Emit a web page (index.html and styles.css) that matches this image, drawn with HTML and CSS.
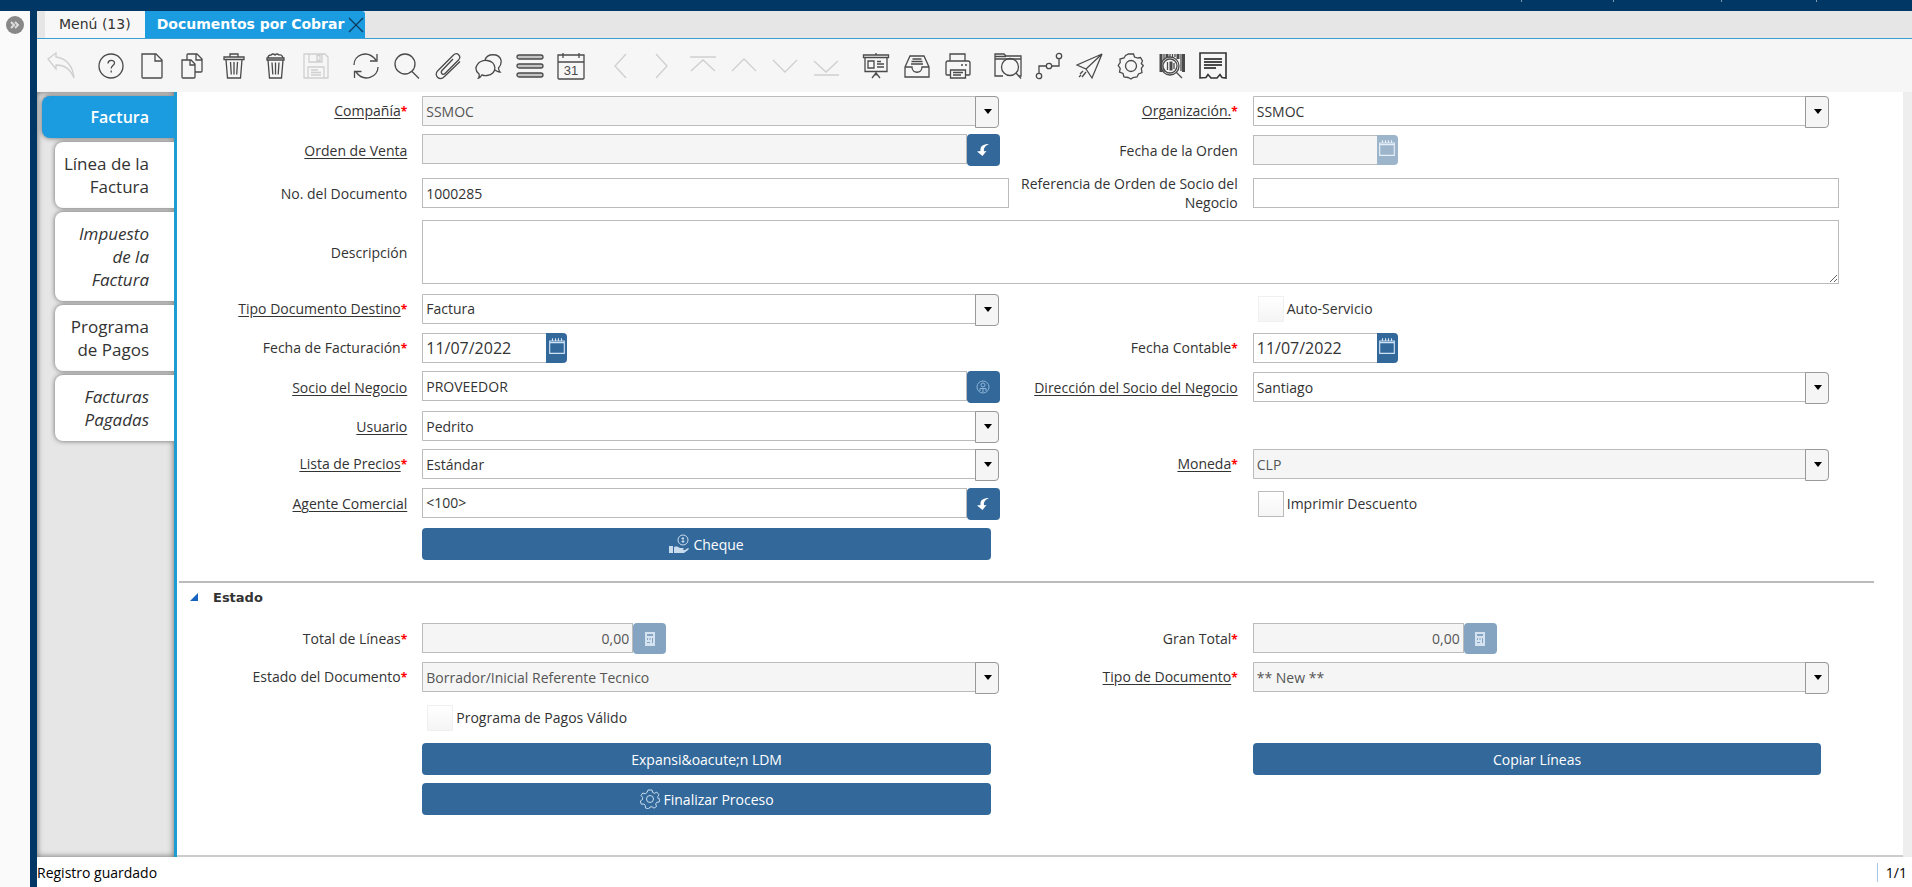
FILE: index.html
```html
<!DOCTYPE html>
<html lang="es">
<head>
    <meta charset="UTF-8">
    <meta name="viewport" content="width=device-width, initial-scale=1.0">
    <title>Documentos por Cobrar</title>
    <link rel="stylesheet" href="styles.css">
</head>
<body>
    <header class="top-bar">
        <span class="top-item item-user"></span>
        <span class="top-item item-prefs"></span>
        <span class="top-item item-role"></span>
        <span class="top-item item-exit"></span>
    </header>
    <div class="desktop">
        <div class="rail">
            <button class="expand-btn" type="button" aria-label="Expandir">
                <svg viewBox="0 0 18 18"><path d="M5 6l3 3-3 3M9 6l3 3-3 3"/></svg>
            </button>
        </div>
        <div class="window">
            <nav class="tabs">
                <button class="tab" type="button">Menú (13)</button>
                <button class="tab active" type="button">Documentos por Cobrar
                    <svg viewBox="0 0 16 16"><path d="M1 1l14 14M15 1L1 15"/></svg>
                </button>
            </nav>

            <div class="toolbar">
                <div class="group">
                    <button type="button" aria-label="Deshacer" disabled><svg viewBox="0 0 28 28"><path d="M1 7l8-6v4c9 1 17 8 18 21-4-9-9-13-18-13v4L1 7z"/></svg></button>
                </div>
                <div class="group">
                    <button type="button" aria-label="Ayuda"><svg viewBox="0 0 28 28"><circle cx="14" cy="14" r="12"/><path d="M11 11.500c0-4 6.500-4 6.500-.5 0 2.500-3.300 2.700-3.300 5.500M14.200 18.500v2"/></svg></button>
                    <button type="button" aria-label="Nuevo"><svg viewBox="0 0 28 28"><path d="M4 2h14l6 6v17q0 1-1 1H5q-1 0-1-1zM17 2v7h7"/></svg></button>
                    <button type="button" aria-label="Copiar"><svg viewBox="0 0 28 28"><path d="M3 8h9l4 4v13q0 1-1 1H4q-1 0-1-1zM11 8v5h5M8 8V3q0-1 1-1h9l5 5v12q0 1-1 1h-6M17 2v6h6"/></svg></button>
                    <button type="button" aria-label="Borrar"><svg viewBox="0 0 28 28"><path d="M4 5h20v2.500H4zM10 5V2h8v3M6 7.500L7.500 26h13L22 7.500M10.500 10l.8 12.500M14 10v12.500M17.500 10l-.8 12.500"/></svg></button>
                    <button type="button" aria-label="Borrar varios"><svg viewBox="0 0 28 28"><path d="M6 6h17v2H6zM7 6q0-3 3-3 2-2 4 0 2-2 4 0 3-1 4 3M7 8l1.500 18h12L22 8M11 10.500l.8 12M14.500 10.500v12M18 10.500l-.8 12"/></svg></button>
                    <button type="button" aria-label="Guardar" disabled><svg viewBox="0 0 28 28"><path d="M2 2h21l3 3v21H2zM7 2v8h13V2M15 3.500h3v5h-3zM6 26V15h16v11M9 18h7M9 20.500h10M9 23h10"/></svg></button>
                </div>
                <div class="group">
                    <button type="button" aria-label="Refrescar"><svg viewBox="0 0 28 28"><path d="M2 13C2 3 15-3 24 8M25 2v7h-7M26 15c0 10-14 16-22 5M2.500 26v-6.500h7"/></svg></button>
                    <button type="button" aria-label="Buscar"><svg viewBox="0 0 28 28"><circle cx="12" cy="12" r="10"/><path d="M19 19.500l7 7"/></svg></button>
                    <button type="button" aria-label="Adjuntos"><svg viewBox="0 0 28 28"><path d="M19 7L8 18.500c-2 2.500 1 5 3 3L24.500 8C28 4 23-.5 19.500 3L4 18.500c-5 5 1.500 11 6.500 6L26 9.500"/></svg></button>
                    <button type="button" aria-label="Chat"><svg viewBox="0 0 28 28"><path d="M3.500 26c1-1.500 1-2.500.5-4-7-6-.5-14 8-13.500 10 .5 11 14 0 15-2 .2-4-.2-5-.7-1 1.500-2 2.800-3.500 3.200zM10 8C12 1 24 1 26 8c.7 4-.5 6-2.500 8 0 2 .5 3 1.500 4-2.500 0-3.500-1-5-2"/></svg></button>
                    <button type="button" aria-label="Cuadrícula"><svg viewBox="0 0 28 28"><rect class="bar" x="1" y="3" width="26" height="4" rx="2"/><rect class="bar" x="1" y="12" width="26" height="4" rx="2"/><rect class="bar" x="1" y="21" width="26" height="4" rx="2"/></svg></button>
                    <button type="button" aria-label="Calendario"><svg viewBox="0 0 28 28"><path d="M1 3h26v23q0 1-1 1H2q-1 0-1-1zM1 10h26M6 1v5M22 1v5"/><text x="14" y="23">31</text></svg></button>
                </div>
                <div class="group">
                    <button type="button" aria-label="Anterior" disabled><svg viewBox="0 0 28 28"><path d="M19 2L8 14l11 12"/></svg></button>
                    <button type="button" aria-label="Siguiente" disabled><svg viewBox="0 0 28 28"><path d="M8 2l11 12L8 26"/></svg></button>
                    <button type="button" aria-label="Primero" disabled><svg viewBox="0 0 28 28"><path d="M1 5h26M2 19L14 8l12 11"/></svg></button>
                    <button type="button" aria-label="Subir" disabled><svg viewBox="0 0 28 28"><path d="M2 19L14 7l12 12"/></svg></button>
                    <button type="button" aria-label="Bajar" disabled><svg viewBox="0 0 28 28"><path d="M2 8l12 12L26 8"/></svg></button>
                    <button type="button" aria-label="Último" disabled><svg viewBox="0 0 28 28"><path d="M2 9l12 11L26 9M2 23h25"/></svg></button>
                </div>
                <div class="group">
                    <button type="button" aria-label="Informe"><svg viewBox="0 0 28 28"><path d="M1.500 3h25v2.500h-25zM3 5.500v14h22v-14M14 1v2M14 19.500v4M14 21l-4 5M14 21l4 5M6 9h6v7H6zM15 9.500h4M15 12h7M15 15h7"/></svg></button>
                    <button type="button" aria-label="Archivo"><svg viewBox="0 0 28 28"><path d="M2 15L7 4h14l5 11v10H2zM2 15h7c0 7 10 7 10 0h7M9.500 7h9M8.500 9.500h11M8 12h12"/></svg></button>
                    <button type="button" aria-label="Imprimir"><svg viewBox="0 0 28 28"><path d="M6 9V2h15v7M6 23H3q-1 0-1-1V11q0-2 2-2h20q2 0 2 2v11q0 1-1 1h-3M6.500 18h15v8h-15zM9 20.500h10M9 23h8M17 13h2M21 13h2"/></svg></button>
                </div>
                <div class="group">
                    <button type="button" aria-label="Zoom"><svg viewBox="0 0 28 28"><path d="M9 24H1V2h9l2 2h15v20h-2M1 7h26M1 4.500h11"/><circle cx="16" cy="15" r="8.500"/><path d="M22 21l5 5.500"/></svg></button>
                    <button type="button" aria-label="Flujo"><svg viewBox="0 0 28 28"><circle cx="4" cy="24" r="2.700"/><circle cx="14" cy="14" r="2.700"/><circle cx="24" cy="4" r="2.700"/><path d="M4 21v-7h7M17 14h7V7"/></svg></button>
                    <button type="button" aria-label="Enviar"><svg viewBox="0 0 28 28"><path d="M26 2L1 13l9 4L26 2l-10 24-6-9M4 22l3-3M6 25l4-5M3 25l2-2"/></svg></button>
                    <button type="button" aria-label="Proceso"><svg viewBox="0 0 28 28"><circle cx="14" cy="14" r="5.500"/><path d="M11.500 2h5l1 3 3.500 1 2.500-.5 2 3.500-1.200 2.500 2 2-2 3 .7 4-3.500 1.500-1.500 3-4 .5-2 1.500-3-1.500-4-.5-1-3.500L2.500 20l.7-3.500-2-3 2-3L3 7l4-1 1.500-2.500z"/></svg></button>
                    <button type="button" aria-label="Código de barras"><svg viewBox="0 0 28 28"><path class="thick" d="M3 2v18M9 2v4M20 2v5M25.500 2v18"/><path d="M6 2v6M12 2v3M14.500 2v3M17 2v3M23 2v17M6 17v3"/><circle cx="12" cy="14" r="7"/><circle cx="12" cy="14" r="9"/><path class="thick" d="M13 9.500v9"/><path d="M9.500 10v8M16 11v6M18 20l6 6"/></svg></button>
                    <button type="button" aria-label="Recibo"><svg viewBox="0 0 28 28"><path class="dark" d="M1 1h26v25l-4-.5-2-3-3 3.500h-6l-3-3.500-2 3-6 .5z"/><path class="lines" d="M5 7h18M5 10h18M5 13h18M5 16h12"/></svg></button>
                </div>
            </div>

            <div class="content">
                <nav class="side-tabs">
                    <button class="side-tab selected" type="button">Factura</button>
                    <button class="side-tab" type="button">Línea de la Factura</button>
                    <button class="side-tab readonly" type="button">Impuesto de la Factura</button>
                    <button class="side-tab" type="button">Programa de Pagos</button>
                    <button class="side-tab readonly" type="button">Facturas Pagadas</button>
                </nav>

                <form class="form">
                    <div class="fields">
                        <label class="label" for="compania"><u>Compañía</u><b>*</b></label>
                        <div class="cell"><span class="combo"><select id="compania" disabled><option>SSMOC</option></select></span></div>
                        <label class="label" for="organizacion"><u>Organización.</u><b>*</b></label>
                        <div class="cell"><span class="combo"><select id="organizacion"><option>SSMOC</option></select></span></div>

                        <label class="label" for="orden"><u>Orden de Venta</u></label>
                        <div class="cell">
                            <span class="lookup">
                                <input id="orden" type="text" disabled>
                                <button class="icon-btn" type="button" aria-label="Buscar orden"><svg viewBox="0 0 14 14"><path class="fill" d="M13 1C7 1 4 3 4.500 8L1 8.500 6.500 13l4-5-2.500.3C7.500 5 9 3 13 1z"/></svg></button>
                            </span>
                        </div>
                        <label class="label" for="fecha-orden">Fecha de la Orden</label>
                        <div class="cell">
                            <span class="date">
                                <input id="fecha-orden" type="text" disabled>
                                <button class="date-btn" type="button" aria-label="Calendario" disabled><svg viewBox="0 0 16 16"><path d="M1.500 3.500h13v11h-13zM1.500 5h13M4 1v3M6.700 1v3M9.300 1v3M12 1v3"/></svg></button>
                            </span>
                        </div>

                        <label class="label" for="documento">No. del Documento</label>
                        <div class="cell"><input id="documento" type="text" value="1000285"></div>
                        <label class="label" for="referencia">Referencia de Orden de Socio del Negocio</label>
                        <div class="cell"><input id="referencia" type="text"></div>

                        <label class="label" for="descripcion">Descripción</label>
                        <div class="cell wide"><textarea id="descripcion"></textarea></div>

                        <label class="label" for="tipo-destino"><u>Tipo Documento Destino</u><b>*</b></label>
                        <div class="cell"><span class="combo"><select id="tipo-destino"><option>Factura</option></select></span></div>
                        <div class="cell check right"><input id="auto-servicio" type="checkbox" disabled><label for="auto-servicio">Auto-Servicio</label></div>

                        <label class="label" for="fecha-factura">Fecha de Facturación<b>*</b></label>
                        <div class="cell">
                            <span class="date">
                                <input id="fecha-factura" type="text" value="11/07/2022">
                                <button class="date-btn" type="button" aria-label="Calendario"><svg viewBox="0 0 16 16"><path d="M1.500 3.500h13v11h-13zM1.500 5h13M4 1v3M6.700 1v3M9.300 1v3M12 1v3"/></svg></button>
                            </span>
                        </div>
                        <label class="label" for="fecha-contable">Fecha Contable<b>*</b></label>
                        <div class="cell">
                            <span class="date">
                                <input id="fecha-contable" type="text" value="11/07/2022">
                                <button class="date-btn" type="button" aria-label="Calendario"><svg viewBox="0 0 16 16"><path d="M1.500 3.500h13v11h-13zM1.500 5h13M4 1v3M6.700 1v3M9.300 1v3M12 1v3"/></svg></button>
                            </span>
                        </div>

                        <label class="label" for="socio"><u>Socio del Negocio</u></label>
                        <div class="cell">
                            <span class="lookup">
                                <input id="socio" type="text" value="PROVEEDOR">
                                <button class="icon-btn" type="button" aria-label="Buscar socio"><svg class="partner" viewBox="0 0 14 14"><circle cx="7" cy="7" r="6"/><circle cx="7" cy="5" r="2"/><path d="M4 11V8.500h6V11M7 8v4"/></svg></button>
                            </span>
                        </div>
                        <label class="label" for="direccion"><u>Dirección del Socio del Negocio</u></label>
                        <div class="cell"><span class="combo"><select id="direccion"><option>Santiago</option></select></span></div>

                        <label class="label" for="usuario"><u>Usuario</u></label>
                        <div class="cell"><span class="combo"><select id="usuario"><option>Pedrito</option></select></span></div>

                        <label class="label first" for="precios"><u>Lista de Precios</u><b>*</b></label>
                        <div class="cell"><span class="combo"><select id="precios"><option>Estándar</option></select></span></div>
                        <label class="label" for="moneda"><u>Moneda</u><b>*</b></label>
                        <div class="cell"><span class="combo"><select id="moneda" disabled><option>CLP</option></select></span></div>

                        <label class="label" for="agente"><u>Agente Comercial</u></label>
                        <div class="cell">
                            <span class="lookup">
                                <input id="agente" type="text" value="&lt;100&gt;">
                                <button class="icon-btn" type="button" aria-label="Buscar agente"><svg viewBox="0 0 14 14"><path class="fill" d="M13 1C7 1 4 3 4.500 8L1 8.500 6.500 13l4-5-2.500.3C7.500 5 9 3 13 1z"/></svg></button>
                            </span>
                        </div>
                        <div class="cell check right"><input id="descuento" type="checkbox"><label for="descuento">Imprimir Descuento</label></div>

                        <div class="cell left"><button class="action" type="button"><svg viewBox="0 0 20 20"><circle cx="14" cy="6" r="5"/><path d="M14 3v6M12.500 4.500h2.500M12.500 7.500h3"/><path class="fill" d="M0 12h4v7H0zM5 13c3-1 4 0 6 1h3c1 0 1 2-1 2h3l3-2c1 0 1 1 0 2l-4 3H5z"/></svg>Cheque</button></div>
                    </div>

                    <h2 class="section"><span class="arrow"></span>Estado</h2>

                    <div class="fields">
                        <label class="label" for="total">Total de Líneas<b>*</b></label>
                        <div class="cell">
                            <span class="number">
                                <input id="total" type="text" value="0,00" disabled>
                                <button class="icon-btn" type="button" aria-label="Calculadora" disabled><svg viewBox="0 0 14 14"><path class="fill" d="M2 0h10v14H2zM4 2v2h6V2zM4 6v2h1V6zM6.500 6v2h1V6zM9 6v5h1V6zM4 10v1h3v-1z" fill-rule="evenodd"/></svg></button>
                            </span>
                        </div>
                        <label class="label" for="gran-total">Gran Total<b>*</b></label>
                        <div class="cell">
                            <span class="number">
                                <input id="gran-total" type="text" value="0,00" disabled>
                                <button class="icon-btn" type="button" aria-label="Calculadora" disabled><svg viewBox="0 0 14 14"><path class="fill" d="M2 0h10v14H2zM4 2v2h6V2zM4 6v2h1V6zM6.500 6v2h1V6zM9 6v5h1V6zM4 10v1h3v-1z" fill-rule="evenodd"/></svg></button>
                            </span>
                        </div>

                        <label class="label" for="estado">Estado del Documento<b>*</b></label>
                        <div class="cell"><span class="combo"><select id="estado" disabled><option>Borrador/Inicial Referente Tecnico</option></select></span></div>
                        <label class="label" for="tipo"><u>Tipo de Documento</u><b>*</b></label>
                        <div class="cell"><span class="combo"><select id="tipo" disabled><option>** New **</option></select></span></div>

                        <div class="cell check left"><input id="valido" type="checkbox" disabled><label for="valido">Programa de Pagos Válido</label></div>

                        <div class="cell left"><button class="action" type="button">Expansi&amp;oacute;n LDM</button></div>
                        <div class="cell right"><button class="action" type="button">Copiar Líneas</button></div>

                        <div class="cell left"><button class="action" type="button"><svg viewBox="0 0 20 20"><circle cx="10" cy="10" r="3.500"/><path d="M8 1h4l.7 2.500 1.800.8 2.300-1.200 2.200 2.700-1.300 2 .5 2L20 10l-.8 3-2.500.3-1 1.700.8 2.500-2.500 1.700-2-1.500-2 .3L8.500 20l-3-1-.3-2.700L4 15l-2.700.2L.3 12l2.200-1.500.1-2L1 6.500 2.800 4l2.400.8L7 3.500z"/></svg>Finalizar Proceso</button></div>
                    </div>
                </form>
            </div>

            <footer class="status">
                <span>Registro guardado</span>
                <span class="record">1/1</span>
            </footer>
        </div>
    </div>
</body>
</html>
```
FILE: styles.css
```css
* {
    box-sizing: border-box;
}
body {
    margin: 0;
    min-height: 100vh;
    display: flex;
    flex-direction: column;
    font-family: "Open Sans", "Noto Sans", sans-serif;
    font-size: 14px;
    line-height: 19px;
    color: #333;
    background: #fff;
}
button, input, select, textarea {
    font: inherit;
    color: inherit;
    margin: 0;
}
button {
    border: none;
    padding: 0;
    cursor: pointer;
}
svg {
    fill: none;
    stroke: currentColor;
}

/* Header and left rail */
.top-bar {
    height: 11px;
    display: flex;
    justify-content: flex-end;
    background: #003764;
}
.top-item {
    height: 2px;
    border-left: 1px solid #7f9bb2;
}
.item-user {
    width: 92px;
}
.item-prefs {
    width: 108px;
}
.item-role {
    width: 95px;
}
.item-exit {
    width: 96px;
}
.desktop {
    flex: 1;
    display: flex;
}
.rail {
    width: 37px;
    padding: 5px 0 0 6px;
    background: #fafafa;
    border-right: 7px solid #003764;
}
.expand-btn {
    display: block;
    width: 18px;
    height: 18px;
    border-radius: 50%;
    background: #888;
    color: #ddd;
}
.expand-btn svg {
    display: block;
    stroke-width: 2;
}
.window {
    flex: 1;
    min-width: 0;
    display: flex;
    flex-direction: column;
}

/* Window tabs */
.tabs {
    display: flex;
    height: 28px;
    padding-left: 8px;
    background: #e6e6e6;
    border-bottom: 1px solid #3c9fd3;
    font-family: "DejaVu Sans", Verdana, sans-serif;
    font-size: 14px;
}
.tab {
    padding: 0 14px;
    background: #f7f7f7;
}
.tab.active {
    display: flex;
    align-items: center;
    gap: 4px;
    padding: 0 1px 0 12px;
    background: #1c9ce0;
    color: #fff;
    font-weight: bold;
    border-radius: 0 3px 0 0;
}
.tab svg {
    width: 16px;
    height: 16px;
    color: #0b3a5c;
    stroke-width: 1.3;
}

/* Toolbar */
.toolbar {
    display: flex;
    gap: 9px;
    height: 53px;
    padding-left: 3px;
    background: #f6f6f6;
}
.group {
    display: flex;
    align-items: center;
}
.group button {
    width: 41px;
    height: 41px;
    background: none;
    color: #4a4a4a;
}
.group button:disabled {
    color: #cfcfcf;
}
.group svg {
    display: block;
    width: 28px;
    height: 28px;
    margin: 0 auto;
    stroke-width: 1.3;
}
.group .bar {
    fill: #c4c4c4;
}
.group .thick {
    stroke-width: 3;
}
.group .dark {
    stroke: #333;
    stroke-width: 1.6;
}
.group .lines {
    stroke-width: 2;
}
.group text {
    font: 13px "Liberation Sans", sans-serif;
    text-anchor: middle;
    fill: #4a4a4a;
    stroke: none;
}

/* Side tabs */
.content {
    flex: 1;
    display: flex;
    border-right: 9px solid #eee;
}
.side-tabs {
    width: 140px;
    display: flex;
    flex-direction: column;
    align-items: flex-end;
    gap: 4px;
    padding-top: 4px;
    background: #e6e6e6;
    border-right: 3px solid #1c9cd0;
    box-shadow: inset 0 0 6px #666;
}
.side-tab {
    width: 119px;
    padding: 10px 25px 10px 8px;
    border-radius: 8px 0 0 8px;
    background: #fff;
    box-shadow: 0 0 5px #666;
    font-size: 17px;
    line-height: 23px;
    text-align: right;
    clip-path: inset(-6px 0 -6px -6px);
}
.side-tab.selected {
    width: 132px;
    padding-bottom: 9px;
    background: #1c9ce0;
    color: #fff;
    font-size: 16px;
    font-weight: 600;
}
.side-tab.readonly {
    font-style: italic;
}

/* Form */
.form {
    flex: 1;
    min-width: 0;
    padding: 0 29px 24px 1px;
    border-bottom: 2px solid #ccc;
}
.fields {
    display: grid;
    grid-template-columns: 5fr 12fr 5fr 12fr;
    align-items: center;
    margin-right: 35px;
}
.label {
    padding: 4px 15px 4px 8px;
    text-align: right;
}
.label b {
    color: #f00;
    font-size: 12px;
}
.label u {
    text-underline-offset: 2px;
}
.cell {
    padding: 4px 0;
}
.first {
    grid-column: 1;
}
.left {
    grid-column: 2;
}
.right {
    grid-column: 4;
}
.wide {
    grid-column: 2 / 5;
}
input, select, textarea {
    display: block;
    width: 100%;
    height: 30px;
    padding: 0 3px;
    border: 1px solid #bbb;
    border-radius: 0;
    outline: none;
    background: #fff;
}
input:disabled, select:disabled {
    background: #f5f5f5;
    color: #555;
    opacity: 1;
}
textarea {
    height: 64px;
}
.combo {
    position: relative;
    display: block;
    width: calc(100% - 10px);
}
.combo select {
    appearance: none;
    border-radius: 0 4px 4px 0;
}
/* drop-down button */
.combo::before {
    content: "";
    position: absolute;
    top: 0;
    right: 0;
    width: 22px;
    height: 30px;
    border: 1px solid #999;
    border-radius: 0 4px 4px 0;
    background: #f5f5f5;
    pointer-events: none;
}
.combo::after {
    content: "";
    position: absolute;
    top: 13px;
    right: 7px;
    border: 4px solid transparent;
    border-top: 5px solid #000;
    border-bottom: none;
    pointer-events: none;
}
.lookup, .date, .number {
    display: flex;
}
.lookup {
    width: calc(100% - 9px);
}
.date {
    width: 145px;
}
.date input {
    font-size: 16px;
    border-right: none;
}
.number {
    width: 244px;
}
.number input {
    text-align: right;
}
.icon-btn {
    flex: none;
    width: 33px;
    height: 32px;
    border-radius: 4px;
    background: #32689a;
    color: #fff;
}
.number .icon-btn {
    height: 31px;
}
.icon-btn svg {
    display: block;
    width: 14px;
    height: 14px;
    margin: 0 auto;
}
.icon-btn .partner {
    color: #8db4d8;
}
.date-btn {
    flex: none;
    width: 21px;
    height: 30px;
    border-radius: 0 4px 4px 0;
    background: #32689a;
    color: #cfe3f5;
}
.date-btn svg {
    display: block;
    width: 18px;
    height: 18px;
    margin: 0 auto 4px;
}
.icon-btn:disabled {
    background: #84a4c1;
    color: #d5e3f0;
}
.date-btn:disabled {
    background: #9db5ca;
    color: #e6f0fa;
}
.fill {
    fill: currentColor;
    stroke: none;
}
.check {
    display: flex;
    align-items: center;
    gap: 3px;
    height: 41px;
    padding-left: 5px;
}
.check.left {
    height: 43px;
}
.check input {
    appearance: none;
    width: 26px;
    height: 26px;
    background: linear-gradient(#fff, #f5f5f5);
}
.check input:disabled {
    border-color: #f0f0f0;
}
.action {
    display: flex;
    align-items: center;
    justify-content: center;
    gap: 4px;
    width: 97%;
    height: 32px;
    border-radius: 4px;
    background: #32689a;
    color: #fff;
}
.action svg {
    width: 20px;
    height: 20px;
    color: #c9dcee;
}
.section {
    display: flex;
    align-items: center;
    gap: 15px;
    height: 38px;
    margin: 17px 0 0 1px;
    padding: 0 0 8px 11px;
    border-top: 2px solid #bbb;
    font: bold 13px "DejaVu Sans", Verdana, sans-serif;
}
.arrow {
    border: 4px solid;
    border-color: transparent #1565c0 #1565c0 transparent;
}

/* Status bar */
.status {
    display: flex;
    justify-content: space-between;
    align-items: center;
    height: 30px;
    color: #000;
}
.record {
    padding: 0 5px 0 8px;
    border-left: 1px solid #a9c6e4;
}
```
